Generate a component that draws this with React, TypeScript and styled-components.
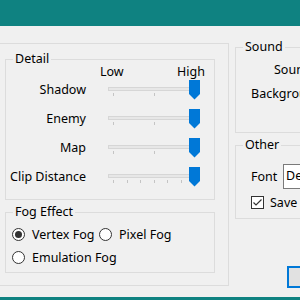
import React from "react";
import styled, { createGlobalStyle } from "styled-components";

const GlobalStyle = createGlobalStyle`
  html, body { margin: 0; padding: 0; background: #f0f0f0; overflow: hidden; }
  body {
    font-family: "Noto Sans", "Open Sans", sans-serif;
    font-size: 12.5px;
    color: #000;
  }
  * { box-sizing: border-box; }
`;

const Window = styled.div`
  width: 300px;
  height: 300px;
  display: flex;
  flex-direction: column;
  overflow: hidden;
  background: #f0f0f0;
`;

const TitleBar = styled.div`
  flex: none;
  height: 26px;
  background: #0f8281;
`;

const Client = styled.div`
  flex: 1;
  min-height: 0;
  display: flex;
  align-items: flex-start;
  padding-top: 17px;
`;

const BottomEdge = styled.div`
  flex: none;
  height: 3px;
  background: #0f8281;
`;

const OuterPanel = styled.div`
  flex: none;
  margin-left: -1px;
  width: 230px;
  height: 243px;
  border: 1px solid #dcdcdc;
  padding: 15px 0 0 5px;
  display: flex;
  flex-direction: column;
  gap: 12px;
`;

const Group = styled.div<{ $w: number; $h: number; $gap?: number }>`
  position: relative;
  flex: none;
  width: ${(p) => p.$w}px;
  height: ${(p) => p.$h}px;
  margin-top: ${(p) => p.$gap ?? 0}px;
  border: 1px solid #dcdcdc;
`;

const Legend = styled.span`
  position: absolute;
  top: -9px;
  left: 7px;
  padding: 0 2px;
  line-height: 16px;
  background: #f0f0f0;
  white-space: nowrap;
`;

const DetailBody = styled.div`
  display: grid;
  grid-template-columns: 80px 92px;
  column-gap: 22px;
  padding-top: 4px;
`;

const ScaleHeader = styled.div`
  grid-column: 2;
  display: flex;
  justify-content: space-between;
  margin: 0 -5px 0 -8px;
  line-height: 16px;
  height: 16px;
`;

const RowLabel = styled.div`
  text-align: right;
  line-height: 20px;
  white-space: nowrap;
`;

const SliderBox = styled.div`
  position: relative;
  height: 29px;
`;

const Track = styled.div`
  margin-top: 7px;
  height: 4px;
  border: 1px solid #d6d6d6;
  background: #e7e7e7;
`;

const Ticks = styled.div`
  display: flex;
  justify-content: space-between;
  padding: 0 5px 0 5px;
  margin-top: 2px;
`;

const Tick = styled.span`
  width: 1px;
  height: 3px;
  background: #c4c4c4;
`;

const ThumbSvg = styled.svg`
  position: absolute;
  right: 0;
  top: 0;
`;

function Slider({ ticks }: { ticks: number }) {
  return (
    <SliderBox>
      <Track />
      <Ticks>
        {Array.from({ length: ticks }).map((_, i) => (
          <Tick key={i} />
        ))}
      </Ticks>
      <ThumbSvg width="11" height="20" viewBox="0 0 11 20">
        <path d="M0 0 H11 V14 L5.5 19.5 L0 14 Z" fill="#0078d7" />
      </ThumbSvg>
    </SliderBox>
  );
}

const FogBody = styled.div`
  display: grid;
  grid-template-columns: 87px auto;
  padding: 10px 0 0 6px;
`;

const RadioItem = styled.label`
  display: flex;
  align-items: center;
  gap: 7px;
  height: 23px;
  white-space: nowrap;
`;

const RadioCircle = styled.span<{ $on?: boolean }>`
  flex: none;
  width: 13px;
  height: 13px;
  border-radius: 50%;
  border: 1px solid #333;
  background: #fff;
  display: flex;
  align-items: center;
  justify-content: center;
  &::after {
    content: "";
    display: ${(p) => (p.$on ? "block" : "none")};
    width: 7px;
    height: 7px;
    border-radius: 50%;
    background: #333;
  }
`;

const RightColumn = styled.div`
  flex: none;
  margin-left: 6px;
  padding-top: 4px;
  display: flex;
  flex-direction: column;
`;

const SoundBody = styled.div`
  padding-top: 13px;
  display: flex;
  flex-direction: column;
  gap: 6px;
`;

const SideLabel = styled.div<{ $indent: number }>`
  padding-left: ${(p) => p.$indent}px;
  line-height: 18px;
  white-space: nowrap;
`;

const OtherBody = styled.div`
  padding: 18px 0 0 15px;
  display: flex;
  flex-direction: column;
  gap: 1px;
`;

const FieldRow = styled.div`
  display: flex;
  align-items: center;
  height: 25px;
`;

const FieldLabel = styled.span`
  width: 32px;
  flex: none;
`;

const TextBox = styled.div`
  width: 80px;
  height: 25px;
  border: 1px solid #7a7a7a;
  background: #fff;
  padding-left: 2px;
  line-height: 22px;
  white-space: nowrap;
  overflow: hidden;
`;

const CheckRow = styled.label`
  display: flex;
  align-items: center;
  gap: 6px;
  height: 24px;
`;

const CheckBoxSvg = styled.svg`
  flex: none;
`;

const Button = styled.div`
  margin: 47px 0 0 52px;
  width: 75px;
  height: 22px;
  border: 2px solid #0078d7;
  background: #e1e1e1;
`;

export default function App() {
  return (
    <Window>
      <GlobalStyle />
      <TitleBar />
      <Client>
        <OuterPanel>
          <Group $w={210} $h={141}>
            <Legend>Detail</Legend>
            <DetailBody>
              <ScaleHeader>
                <span>Low</span>
                <span>High</span>
              </ScaleHeader>
              <RowLabel>Shadow</RowLabel>
              <Slider ticks={3} />
              <RowLabel>Enemy</RowLabel>
              <Slider ticks={3} />
              <RowLabel>Map</RowLabel>
              <Slider ticks={3} />
              <RowLabel>Clip Distance</RowLabel>
              <Slider ticks={7} />
            </DetailBody>
          </Group>
          <Group $w={210} $h={61}>
            <Legend>Fog Effect</Legend>
            <FogBody>
              <RadioItem>
                <RadioCircle $on />
                Vertex Fog
              </RadioItem>
              <RadioItem>
                <RadioCircle />
                Pixel Fog
              </RadioItem>
              <RadioItem>
                <RadioCircle />
                Emulation Fog
              </RadioItem>
            </FogBody>
          </Group>
        </OuterPanel>
        <RightColumn>
          <Group $w={140} $h={86}>
            <Legend>Sound</Legend>
            <SoundBody>
              <SideLabel $indent={38}>Sound</SideLabel>
              <SideLabel $indent={15}>Background</SideLabel>
            </SoundBody>
          </Group>
          <Group $w={140} $h={74} $gap={12}>
            <Legend>Other</Legend>
            <OtherBody>
              <FieldRow>
                <FieldLabel>Font</FieldLabel>
                <TextBox>Default</TextBox>
              </FieldRow>
              <CheckRow>
                <CheckBoxSvg width="13" height="13" viewBox="0 0 13 13">
                  <rect x="0.5" y="0.5" width="12" height="12" fill="#fff" stroke="#333" />
                  <path d="M2.5 6.5 L5 9 L10.5 3.5" fill="none" stroke="#333" strokeWidth="1.2" />
                </CheckBoxSvg>
                Save
              </CheckRow>
            </OtherBody>
          </Group>
          <Button />
        </RightColumn>
      </Client>
      <BottomEdge />
    </Window>
  );
}
